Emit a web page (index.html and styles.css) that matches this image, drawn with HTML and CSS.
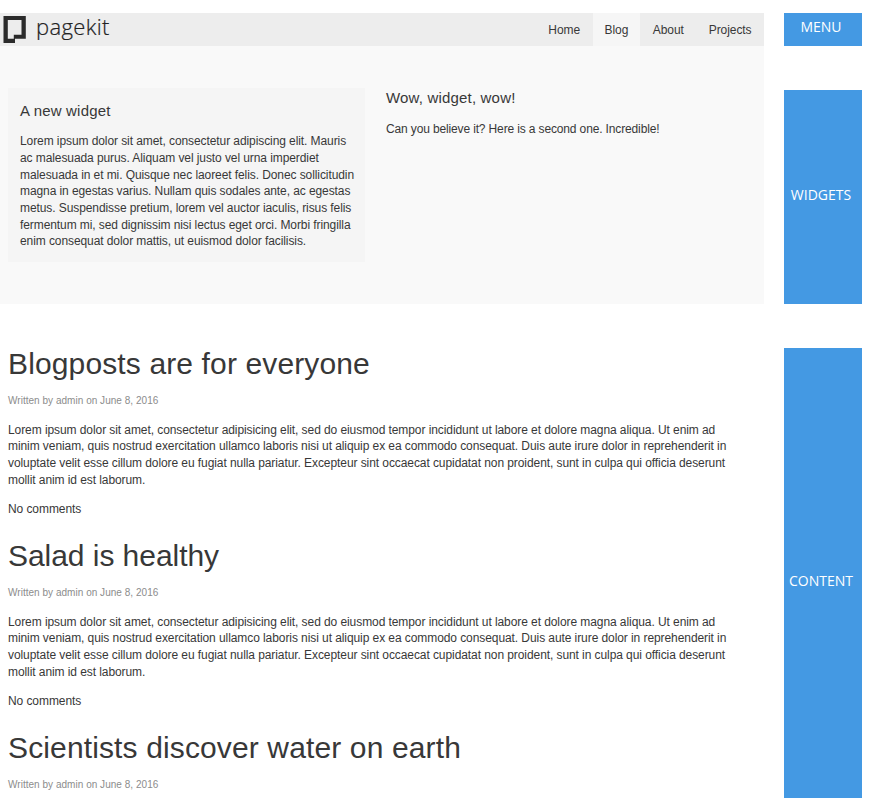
FILE: index.html
```
<!DOCTYPE html>
<html lang="en">
<head>
<meta charset="utf-8">
<title>Pagekit</title>
<link rel="stylesheet" href="styles.css">
</head>
<body>
<div class="layout">
  <div class="page">
    <header class="navbar">
      <a class="brand">
        <svg class="mark" width="24" height="28" viewBox="0 0 24 28"><path fill="#2b2b2b" fill-rule="evenodd" d="M0.5 0H22.8V22.8H12V27H0.5ZM4.8 4V22.8H10.8V18.8H18.5V4Z"/></svg>
        <span class="brand-name">pagekit</span>
      </a>
      <nav class="nav">
        <a class="nav-item">Home</a>
        <a class="nav-item active">Blog</a>
        <a class="nav-item">About</a>
        <a class="nav-item">Projects</a>
      </nav>
    </header>
    <section class="widgets">
      <div class="widget panel">
        <h3>A new widget</h3>
        <p>Lorem ipsum dolor sit amet, consectetur adipiscing elit. Mauris<br>ac malesuada purus. Aliquam vel justo vel urna imperdiet<br>malesuada in et mi. Quisque nec laoreet felis. Donec sollicitudin<br>magna in egestas varius. Nullam quis sodales ante, ac egestas<br>metus. Suspendisse pretium, lorem vel auctor iaculis, risus felis<br>fermentum mi, sed dignissim nisi lectus eget orci. Morbi fringilla<br>enim consequat dolor mattis, ut euismod dolor facilisis.</p>
      </div>
      <div class="widget">
        <h3>Wow, widget, wow!</h3>
        <p class="tight">Can you believe it? Here is a second one. Incredible!</p>
      </div>
    </section>
    <main class="posts">
      <article class="post">
        <h1>Blogposts are for everyone</h1>
        <p class="meta">Written by admin on June 8, 2016</p>
        <p>Lorem ipsum dolor sit amet, consectetur adipisicing elit, sed do eiusmod tempor incididunt ut labore et dolore magna aliqua. Ut enim ad<br>minim veniam, quis nostrud exercitation ullamco laboris nisi ut aliquip ex ea commodo consequat. Duis aute irure dolor in reprehenderit in<br>voluptate velit esse cillum dolore eu fugiat nulla pariatur. Excepteur sint occaecat cupidatat non proident, sunt in culpa qui officia deserunt<br>mollit anim id est laborum.</p>
        <p>No comments</p>
      </article>
      <article class="post">
        <h1 class="tight">Salad is healthy</h1>
        <p class="meta">Written by admin on June 8, 2016</p>
        <p>Lorem ipsum dolor sit amet, consectetur adipisicing elit, sed do eiusmod tempor incididunt ut labore et dolore magna aliqua. Ut enim ad<br>minim veniam, quis nostrud exercitation ullamco laboris nisi ut aliquip ex ea commodo consequat. Duis aute irure dolor in reprehenderit in<br>voluptate velit esse cillum dolore eu fugiat nulla pariatur. Excepteur sint occaecat cupidatat non proident, sunt in culpa qui officia deserunt<br>mollit anim id est laborum.</p>
        <p>No comments</p>
      </article>
      <article class="post">
        <h1>Scientists discover water on earth</h1>
        <p class="meta">Written by admin on June 8, 2016</p>
      </article>
    </main>
  </div>
  <aside class="labels">
    <div class="label label-menu">MENU</div>
    <div class="label label-widgets">WIDGETS</div>
    <div class="label label-content">CONTENT</div>
  </aside>
</div>
</body>
</html>
```
FILE: styles.css
```
* { box-sizing: border-box; }
body {
  margin: 0;
  background: #fff;
  color: #383838;
  font: 12px/16.667px "Liberation Sans", Arial, sans-serif;
  letter-spacing: -0.078px;
}
h1, h3, p { margin: 0; font-weight: 400; }
.layout {
  display: flex;
  gap: 20px;
  height: 800px;
  padding-top: 13px;
  overflow: hidden;
}
.page { width: 764px; }
.navbar {
  display: flex;
  justify-content: space-between;
  height: 33px;
  background: #ededed;
}
.brand { display: flex; padding: 3px 0 0 3px; }
.mark { display: block; }
.brand-name {
  margin: -4px 0 0 9px;
  font: 300 22px/28px "Open Sans", sans-serif;
  letter-spacing: 0.35px;
  color: #222;
  -webkit-text-stroke: 0.2px #222;
}
.nav { display: flex; }
.nav-item { padding: 0 12.5px; line-height: 34px; white-space: nowrap; }
.nav-item.active { padding: 0 12px; background: #f6f6f6; }
.widgets {
  display: flex;
  gap: 21px;
  align-items: flex-start;
  height: 258px;
  padding: 42px 8px 0;
  background: #f9f9f9;
  white-space: nowrap;
}
.widget { width: 357px; }
.panel { height: 174px; padding: 12.5px 12px; background: #f5f5f5; }
.widget h3 {
  margin-bottom: 12.9px;
  font-size: 15px;
  line-height: 20px;
  letter-spacing: 0.18px;
}
.widget p { letter-spacing: -0.085px; }
.widget p.tight { letter-spacing: -0.14px; }
.posts { padding: 41.5px 8px 0; white-space: nowrap; }
.post { height: 192px; }
.post h1 {
  margin-bottom: 12px;
  font-size: 30px;
  line-height: 35px;
  letter-spacing: 0.13px;
}
.post h1.tight { letter-spacing: -0.05px; }
.post p { margin-bottom: 12.6px; }
.post .meta { font-size: 10px; letter-spacing: 0.03px; color: #8c8c8c; }
.labels {
  display: flex;
  flex-direction: column;
  gap: 44px;
  width: 78px;
  letter-spacing: 0;
}
.label {
  display: flex;
  align-items: center;
  justify-content: center;
  background: #4499e3;
  color: #fff;
  font: 14px/20px "Open Sans", sans-serif;
}
.label-menu { height: 33px; padding: 0 4px 5px 0; }
.label-widgets { height: 214px; padding: 0 4px 4px 0; }
.label-content { height: 450px; padding: 16px 4px 0 0; }
```
